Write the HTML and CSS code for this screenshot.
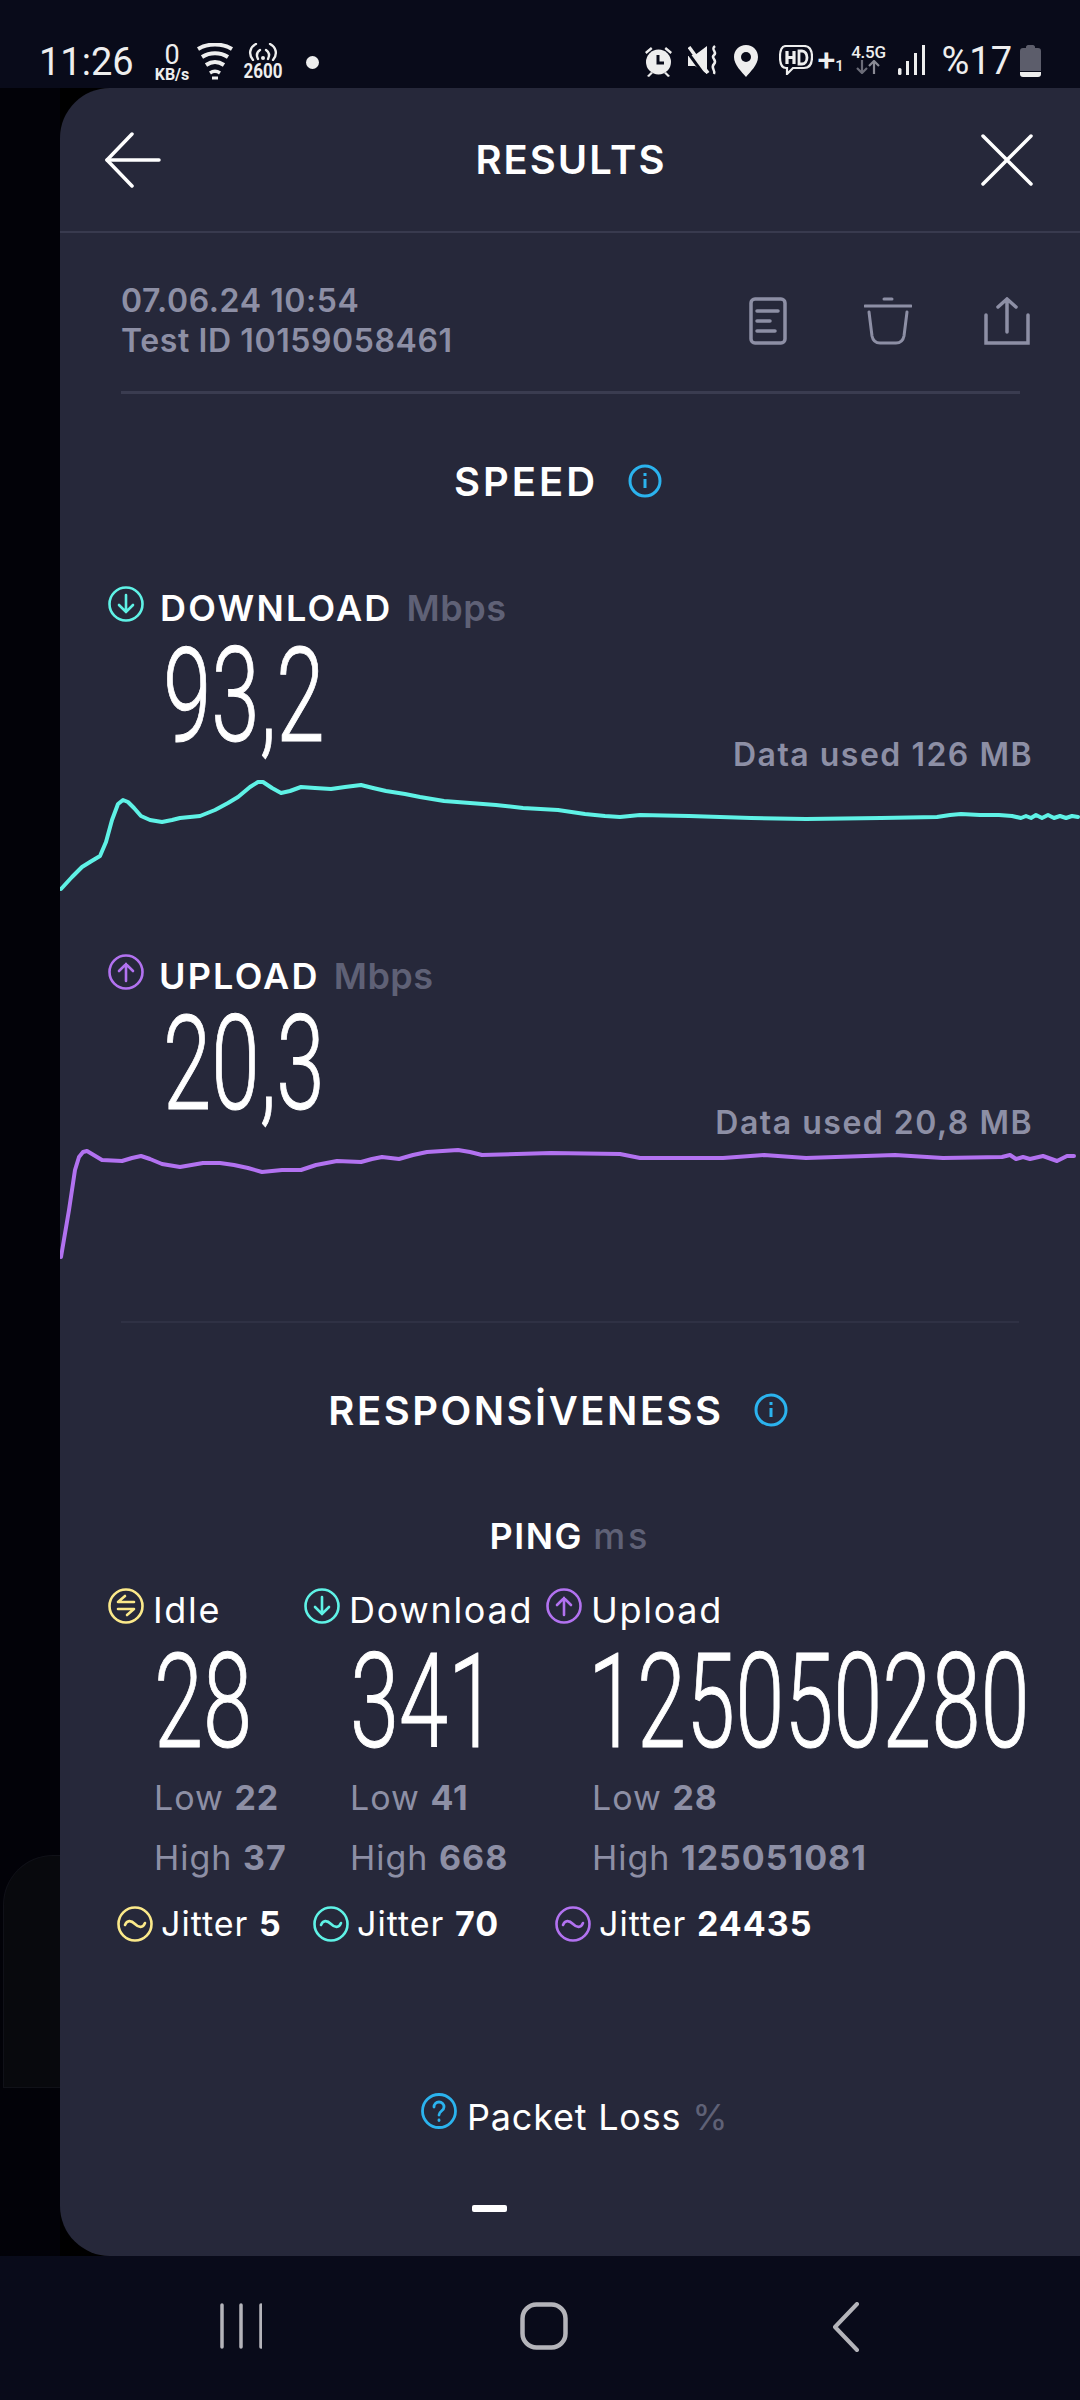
FILE: index.html
```html
<!DOCTYPE html>
<html lang="en">
<head>
  <meta charset="UTF-8" />
  <title>Results</title>
  <link rel="stylesheet" href="styles.css">
</head>
<body>

<div class="status-bar">
  <span class="clock">11:26</span>
  <span class="net-speed"><b>0</b><small>KB/s</small></span>
  <svg class="st-wifi" width="36" height="38" viewBox="0 0 36 38" fill="none" stroke="#eee" stroke-width="4">
    <path d="M1 6C11 0 25 0 35 6"/><path d="M5 14C13 9 23 9 31 14"/><path d="M9 22C15 18 21 18 27 22"/>
    <path d="M13 30C16 28 20 28 23 30" stroke-width="3.5"/><path d="M15 35h6" stroke-width="3"/>
  </svg>
  <span class="hotspot">
    <svg width="32" height="18" viewBox="0 0 32 18" fill="none" stroke="#eee" stroke-width="2.4" stroke-linecap="round">
      <path d="M6 17C1 11 3 4 9 1"/><path d="M26 17C31 11 29 4 23 1"/><path d="M11 16C9 12 10 9 13 7"/><path d="M21 16C23 12 22 9 19 7"/>
      <circle cx="16" cy="15" r="2" fill="#eee" stroke="none"/>
    </svg>
    <b>2600</b>
  </span>
  <i class="st-dot"></i>
  <div class="status-right">
    <svg width="29" height="32" viewBox="0 0 29 32" fill="#eee">
      <circle cx="14.5" cy="17" r="12.5"/>
      <path d="M1 7l6-5 1.500 2-6 5zM28 7l-6-5-1.500 2 6 5zM3 31l4-4 2 1-4 4zM26 31l-4-4-2 1 4 4z"/>
      <path d="M14 10v8h6" fill="none" stroke="#090b1a" stroke-width="3"/>
    </svg>
    <svg class="st-mute" width="30" height="30" viewBox="0 0 30 30" fill="#eee">
      <path d="M0 10h7l12-9v28L7 21H0z"/>
      <path d="M-2 5l19 26" stroke="#090b1a" stroke-width="3"/><path d="M1 2l19 26" stroke="#eee" stroke-width="3.500"/>
      <path d="M27 1c-5 4 3 6-1 9s4 5 0 9 2 6 0 10" fill="none" stroke="#eee" stroke-width="2.500"/>
    </svg>
    <svg class="st-pin" width="24" height="32" viewBox="0 0 24 32">
      <path d="M12 0C5 0 0 5 0 12c0 8 8 15 12 20 4-5 12-12 12-20C24 5 19 0 12 0z" fill="#eee"/>
      <circle cx="12" cy="12" r="5" fill="#090b1a"/>
    </svg>
    <svg class="st-hd" width="34" height="30" viewBox="0 0 34 30" fill="none" stroke="#eee" stroke-width="2.200">
      <path d="M7 1h18c5 0 8 4 8 11s-3 11-8 11H14l-6 6v-6H7c-4 0-6-4-6-11S3 1 7 1z"/>
      <path d="M8 6v13M15 6v13M8 12.500h7" stroke-width="3.200"/>
      <path d="M20 6v13h3c3 0 5-3 5-6.500S26 6 23 6z" stroke-width="2.800"/>
    </svg>
    <span class="st-plus">+<small>1</small></span>
    <span class="st-gen">4.5G
      <svg width="24" height="14" viewBox="0 0 24 14" fill="none" stroke="#6b6c78" stroke-width="2.200"><path d="M6 0v13M1 8l5 5 5-5"/><path d="M18 14V1M13 6l5-5 5 5" stroke="#8a8b95"/></svg>
    </span>
    <svg class="st-signal" width="27" height="30" viewBox="0 0 27 30" fill="#eee">
      <rect x="0" y="23" width="3.500" height="7" rx="1.500"/><rect x="8" y="16" width="3" height="14"/><rect x="16" y="8" width="3" height="22"/><rect x="24" y="0" width="3" height="30"/>
    </svg>
    <span class="st-batt-text">%17</span>
    <svg class="st-battery" width="21" height="32" viewBox="0 0 21 32">
      <path d="M6 3V2c0-1 1-2 2-2h5c1 0 2 1 2 2v1h3c2 0 3 1 3 3v20H0V6c0-2 1-3 3-3z" fill="#5c5d6b"/>
      <path d="M0 27h21v2c0 2-1 3-3 3H3c-2 0-3-1-3-3z" fill="#eee"/>
    </svg>
  </div>
</div>

<div class="middle">
  <div class="gutter"><div class="ghost-card"></div></div>

  <div class="panel">
    <div class="top-bar">
      <svg class="top-back" width="56" height="56" viewBox="0 0 56 56" fill="none" stroke="#fff" stroke-width="3.500" stroke-linecap="round" stroke-linejoin="round">
        <path d="M27 2L2 28l25 26"/><path d="M2 28h52"/>
      </svg>
      <h1>RESULTS</h1>
      <svg class="top-close" width="52" height="52" viewBox="0 0 52 52" fill="none" stroke="#fff" stroke-width="3.500" stroke-linecap="round">
        <path d="M2 2l48 48M50 2L2 50"/>
      </svg>
    </div>

    <div class="meta">
      <div class="meta-text">
        <div>07.06.24 10:54</div>
        <div>Test ID 10159058461</div>
      </div>
      <div class="meta-icons">
        <svg class="icon-doc" width="38" height="48" viewBox="0 0 38 48" fill="none" stroke="#8d8fa5" stroke-width="3.500" stroke-linecap="round">
          <rect x="2" y="2" width="34" height="44" rx="4"/><path d="M8 14h21M8 24h13M8 34h18"/>
        </svg>
        <svg width="48" height="48" viewBox="0 0 48 48" fill="none" stroke="#8d8fa5" stroke-width="3" stroke-linecap="round">
          <path d="M1 9h46M20 2h8"/><path d="M5 15l3 24c1 5 4 7 8 7h16c4 0 7-2 8-7l3-24"/>
        </svg>
        <svg width="46" height="48" viewBox="0 0 46 48" fill="none" stroke="#8d8fa5" stroke-width="3.500" stroke-linecap="round">
          <path d="M2 18v28h42V18"/><path d="M23 35V2M14 10l9-8 9 8"/>
        </svg>
      </div>
    </div>

    <div class="section-title speed-title">
      <h2>SPEED</h2>
      <svg width="34" height="34" viewBox="0 0 34 34" fill="none" stroke="#2bb3ee" stroke-width="3"><circle cx="17" cy="17" r="15"/><path d="M17 15v9M17 9v3"/></svg>
    </div>

    <div class="speed-block">
      <div class="speed-head">
        <svg class="round-icon" width="36" height="36" viewBox="0 0 36 36" fill="none" stroke="#5ff2e6" stroke-width="2.600" stroke-linecap="round"><circle cx="18" cy="18" r="16.500"/><path d="M18 9v17M11 19l7 7 7-7"/></svg>
        <span class="speed-label">DOWNLOAD</span><span class="unit">Mbps</span>
      </div>
      <div class="speed-row">
        <span class="big-num">93,2</span>
        <span class="data-used">Data used 126 MB</span>
      </div>
      <svg class="chart" width="1020" height="130" viewBox="60 770 1020 130" fill="none" stroke="#5ff2e6" stroke-width="4" stroke-linejoin="round" stroke-linecap="round">
        <polyline points="61,889 72,877 82,867 90,862 100,856 106,842 112,820 118,804 123,800 128,802 134,808 141,816 150,820 162,822 172,820 180,818 200,816 215,810 228,803 238,797 250,787 258,782 263,782 272,788 281,793 290,791 301,787 315,788 331,789 345,787 361,785 373,788 386,791 405,794 420,797 432,799 444,801 470,803 496,805 523,808 558,810 585,814 605,816 620,817 640,815 689,816 751,818 806,819 881,818 937,817 950,815 961,814 980,815 999,815 1012,816 1021,818 1026,816 1031,818 1036,815 1042,818 1048,815 1054,818 1060,816 1066,818 1072,816 1078,817"/>
      </svg>
    </div>

    <div class="speed-block upload-block">
      <div class="speed-head">
        <svg class="round-icon" width="36" height="36" viewBox="0 0 36 36" fill="none" stroke="#b272f0" stroke-width="2.600" stroke-linecap="round"><circle cx="18" cy="18" r="16.500"/><path d="M18 27V10M11 17l7-7 7 7"/></svg>
        <span class="speed-label">UPLOAD</span><span class="unit">Mbps</span>
      </div>
      <div class="speed-row">
        <span class="big-num">20,3</span>
        <span class="data-used">Data used 20,8 MB</span>
      </div>
      <svg class="chart" width="1020" height="130" viewBox="60 1138 1020 130" fill="none" stroke="#b272f0" stroke-width="4" stroke-linejoin="round" stroke-linecap="round">
        <polyline points="61,1257 69,1210 75,1170 79,1157 83,1152 87,1151 92,1154 102,1160 122,1161 132,1158 141,1156 150,1159 162,1164 180,1167 203,1163 220,1163 234,1165 248,1168 262,1172 282,1170 301,1170 316,1165 337,1161 361,1162 372,1159 382,1157 399,1159 413,1155 427,1152 458,1150 470,1152 482,1155 551,1153 620,1154 640,1158 723,1158 764,1155 806,1158 895,1155 943,1158 1002,1157 1010,1155 1016,1159 1023,1157 1030,1159 1043,1156 1057,1161 1067,1156 1074,1156"/>
      </svg>
    </div>

    <div class="section-title resp-title">
      <h2>RESPONSİVENESS</h2>
      <svg width="34" height="34" viewBox="0 0 34 34" fill="none" stroke="#2bb3ee" stroke-width="3"><circle cx="17" cy="17" r="15"/><path d="M17 15v9M17 9v3"/></svg>
    </div>

    <div class="ping-title"><b>PING</b> <span class="unit">ms</span></div>

    <div class="ping-grid">
      <div class="ping-col">
        <div class="ping-head">
          <svg width="36" height="36" viewBox="0 0 36 36" fill="none" stroke="#fbe98a" stroke-width="2.600" stroke-linecap="round" stroke-linejoin="round"><circle cx="18" cy="18" r="16.500"/><path d="M26 14H10l7-6M10 21h16l-7 6"/></svg>
          <span>Idle</span>
        </div>
        <div class="big-num">28</div>
        <div class="low-high">Low <b>22</b></div>
        <div class="low-high">High <b>37</b></div>
        <div class="jitter">
          <svg width="36" height="36" viewBox="0 0 36 36" fill="none" stroke="#fbe98a" stroke-width="2.600" stroke-linecap="round"><circle cx="18" cy="18" r="16.500"/><path d="M8 19c2-5 6-5 10-1s8 4 10-1"/></svg>
          <span>Jitter <b>5</b></span>
        </div>
      </div>
      <div class="ping-col">
        <div class="ping-head">
          <svg width="36" height="36" viewBox="0 0 36 36" fill="none" stroke="#5ff2e6" stroke-width="2.600" stroke-linecap="round"><circle cx="18" cy="18" r="16.500"/><path d="M18 9v17M11 19l7 7 7-7"/></svg>
          <span>Download</span>
        </div>
        <div class="big-num">341</div>
        <div class="low-high">Low <b>41</b></div>
        <div class="low-high">High <b>668</b></div>
        <div class="jitter">
          <svg width="36" height="36" viewBox="0 0 36 36" fill="none" stroke="#5ff2e6" stroke-width="2.600" stroke-linecap="round"><circle cx="18" cy="18" r="16.500"/><path d="M8 19c2-5 6-5 10-1s8 4 10-1"/></svg>
          <span>Jitter <b>70</b></span>
        </div>
      </div>
      <div class="ping-col">
        <div class="ping-head">
          <svg width="36" height="36" viewBox="0 0 36 36" fill="none" stroke="#b272f0" stroke-width="2.600" stroke-linecap="round"><circle cx="18" cy="18" r="16.500"/><path d="M18 27V10M11 17l7-7 7 7"/></svg>
          <span>Upload</span>
        </div>
        <div class="big-num">125050280</div>
        <div class="low-high">Low <b>28</b></div>
        <div class="low-high">High <b>125051081</b></div>
        <div class="jitter">
          <svg width="36" height="36" viewBox="0 0 36 36" fill="none" stroke="#b272f0" stroke-width="2.600" stroke-linecap="round"><circle cx="18" cy="18" r="16.500"/><path d="M8 19c2-5 6-5 10-1s8 4 10-1"/></svg>
          <span>Jitter <b>24435</b></span>
        </div>
      </div>
    </div>

    <div class="packet-loss">
      <svg width="36" height="36" viewBox="0 0 36 36" fill="none" stroke="#2bb3ee" stroke-width="2.800" stroke-linecap="round"><circle cx="18" cy="18" r="16.500"/><path d="M13 14c0-3 2-5 5-5s5 2 5 5c0 4-5 4-5 8"/><path d="M18 27v.5"/></svg>
      <span>Packet Loss</span><span class="unit">%</span>
    </div>

    <div class="pager"></div>
  </div>
</div>

<div class="nav-bar">
  <svg width="42" height="48" viewBox="0 0 42 48" stroke="#b4b4ba" stroke-width="3.500" stroke-linecap="round"><path d="M2 3v42M21 3v42M41 3v42"/></svg>
  <svg width="48" height="48" viewBox="0 0 48 48" fill="none" stroke="#b4b4ba" stroke-width="4.500"><rect x="2.500" y="2.500" width="43" height="43" rx="14"/></svg>
  <svg class="nav-back" width="28" height="50" viewBox="0 0 28 50" fill="none" stroke="#b4b4ba" stroke-width="4" stroke-linecap="round" stroke-linejoin="round"><path d="M25 2L3 25l22 23"/></svg>
</div>

</body>
</html>
```

FILE: styles.css
```css
* {
  box-sizing: border-box;
}
html, body {
  margin: 0;
  height: 2400px;
  overflow: hidden;
}
body {
  background: #090b1a;
  color: #fff;
  font-family: Inter, "Open Sans", sans-serif;
  display: flex;
  flex-direction: column;
}
svg {
  display: block;
  flex: none;
}

/* status bar */
.status-bar {
  height: 88px;
  display: flex;
  align-items: flex-start;
  padding: 42px 39px 0 39px;
  color: #eee;
  font-family: Roboto, sans-serif;
}
.clock {
  font-size: 38px;
  line-height: 40px;
  width: 108px;
}
.net-speed {
  width: 50px;
  display: flex;
  flex-direction: column;
  align-items: center;
  line-height: 1;
}
.net-speed b {
  font-size: 27px;
  font-weight: 400;
  height: 25px;
}
.net-speed small {
  font-size: 16px;
  font-weight: 700;
}
.st-wifi {
  margin-top: 1px;
}
.hotspot {
  width: 37px;
  margin-left: 11px;
  margin-top: 1px;
  display: flex;
  flex-direction: column;
  align-items: center;
}
.hotspot b {
  font-size: 20px;
  line-height: 20px;
  transform: scaleX(.85);
}
.st-dot {
  width: 13px;
  height: 13px;
  border-radius: 50%;
  background: #eee;
  margin: 14px 0 0 25px;
}
.status-right {
  margin-left: auto;
  display: flex;
  align-items: flex-start;
  padding-top: 3px;
}
.st-mute { margin-left: 15px; }
.st-pin { margin-left: 16px; }
.st-hd { margin-left: 21px; }
.st-plus {
  font-size: 32px;
  font-weight: 500;
  line-height: 30px;
  margin-left: 4px;
  width: 34px;
}
.st-plus small {
  font-size: 15px;
  font-weight: 500;
}
.st-gen {
  font-size: 17px;
  font-weight: 500;
  letter-spacing: -.3px;
  line-height: 16px;
  margin-top: -1px;
  display: flex;
  flex-direction: column;
  align-items: center;
  width: 34px;
}
.st-signal { margin-left: 13px; }
.st-batt-text {
  font-size: 38px;
  line-height: 32px;
  margin-left: 16px;
}
.st-battery {
  margin-left: 8px;
}

/* middle area */
.middle {
  height: 2168px;
  display: flex;
  background: #000;
}
.gutter {
  width: 60px;
  background: #020208;
  padding-top: 1767px;
}
.ghost-card {
  height: 233px;
  background: #08090d;
  border: 1px solid #101118;
  border-right: none;
  border-radius: 50px 0 0 0;
  margin-left: 3px;
}
.panel {
  flex: 1;
  background: #26283a;
  border-radius: 50px 0 0 50px;
  overflow: hidden;
}

.top-bar {
  height: 145px;
  border-bottom: 2px solid #383a4e;
  display: flex;
  align-items: center;
  justify-content: space-between;
  padding: 0 47px 0 45px;
}
.top-bar h1 {
  margin: 0;
  font-size: 40px;
  font-weight: 600;
  letter-spacing: 2px;
}

.meta {
  margin: 0 60px 0 61px;
  height: 161px;
  padding-top: 46px;
  border-bottom: 3px solid #3a3c50;
  display: flex;
  justify-content: space-between;
  align-items: flex-start;
}
.meta-text {
  color: #8d8fa5;
  font-size: 32px;
  font-weight: 600;
  letter-spacing: .6px;
  line-height: 40px;
  margin-top: 2px;
}
.meta-icons {
  display: flex;
  gap: 72px;
  margin-right: -10px;
  margin-top: 18px;
}
.icon-doc {
  margin-right: 5px;
}

.section-title {
  display: flex;
  align-items: center;
  justify-content: center;
}
.section-title h2 {
  margin: 0;
  font-size: 40px;
  font-weight: 600;
  letter-spacing: 2.5px;
}
.speed-title {
  margin-top: 67px;
  gap: 30px;
  height: 40px;
  padding-right: 24px;
}
.speed-title h2 {
  letter-spacing: 3px;
}

.speed-block {
  margin-top: 85px;
}
.upload-block {
  margin-top: 54px;
}
.speed-head {
  display: flex;
  align-items: flex-start;
  padding-left: 48px;
  height: 45px;
  font-size: 36px;
  line-height: 44px;
}
.speed-label {
  margin: 0 14px 0 16px;
  font-weight: 600;
  letter-spacing: 2.2px;
}
.upload-block .speed-label {
  margin-left: 15px;
}
.unit {
  color: #5f6176;
  font-weight: 600;
}
.speed-head .unit {
  letter-spacing: .5px;
}
.speed-row {
  display: flex;
  justify-content: space-between;
  align-items: flex-start;
  padding: 0 47px 0 103px;
  height: 137px;
}
.big-num {
  display: block;
  font-family: Roboto, sans-serif;
  font-size: 132px;
  font-weight: 300;
  line-height: 110px;
  -webkit-text-stroke: 1px #fff;
  transform: scaleX(.66);
  transform-origin: left center;
  white-space: nowrap;
}
.speed-row .big-num {
  margin-top: 10px;
}
.data-used {
  color: #8d8fa5;
  font-size: 32px;
  font-weight: 600;
  letter-spacing: 1.5px;
  line-height: 40px;
  margin-top: 104px;
}
.chart {
  margin-top: 2px;
}

.resp-title {
  margin: 53px 61px 0;
  height: 176px;
  border-top: 2px solid #2f3144;
  gap: 30px;
  padding-right: 24px;
}
.ping-title {
  margin-top: 19px;
  text-align: center;
  font-size: 36px;
  line-height: 40px;
}
.ping-title b {
  font-weight: 600;
  letter-spacing: 1.5px;
}
.ping-title .unit {
  font-weight: 500;
  letter-spacing: 3px;
}

.ping-grid {
  display: grid;
  grid-template-columns: 196px 242px 1fr;
  padding-left: 48px;
  margin-top: 32px;
}
.ping-head {
  display: flex;
  align-items: flex-start;
  gap: 9px;
  font-size: 36px;
  letter-spacing: 1.7px;
  line-height: 44px;
  height: 46px;
}
.ping-col .big-num {
  margin: 13px 0 0 46px;
  transform: scaleX(.67);
}
.ping-col:last-child .big-num {
  margin-left: 42px;
}
.low-high {
  margin-left: 46px;
  color: #8d8fa5;
  font-size: 34px;
  letter-spacing: 1px;
  line-height: 60px;
}
.ping-col .big-num + .low-high {
  margin-top: 11px;
}
.low-high b {
  font-weight: 700;
}
.jitter {
  display: flex;
  align-items: center;
  gap: 8px;
  margin: 14px 0 0 9px;
  font-size: 34px;
  letter-spacing: 1px;
  line-height: 44px;
}
.jitter b {
  font-weight: 700;
}

.packet-loss {
  margin-top: 149px;
  display: flex;
  align-items: center;
  font-size: 36px;
  letter-spacing: .8px;
  line-height: 44px;
  padding-left: 361px;
}
.packet-loss svg {
  margin: -12px 10px 0 0;
}
.packet-loss .unit {
  font-weight: 400;
  margin-left: 11px;
  letter-spacing: 0;
}
.pager {
  width: 35px;
  height: 7px;
  border-radius: 2px;
  background: #fff;
  margin: 66px 0 0 412px;
}

/* nav bar */
.nav-bar {
  height: 144px;
  display: flex;
  align-items: flex-start;
  padding: 46px 0 0 220px;
  gap: 258px;
}
.nav-back {
  margin-left: 6px;
}
```
